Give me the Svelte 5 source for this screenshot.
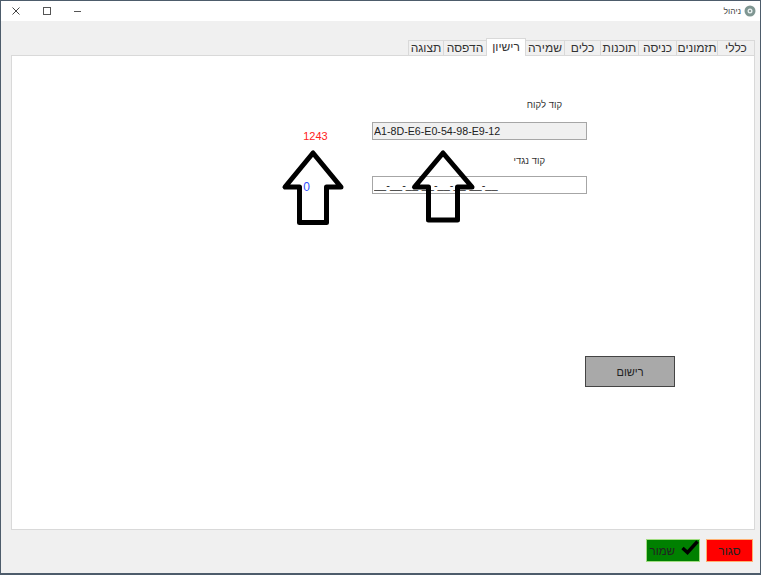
<script lang="ts">
	const tabs = [
		{ label: 'כללי', width: 38 },
		{ label: 'תזמונים', width: 42 },
		{ label: 'כניסה', width: 39 },
		{ label: 'תוכנות', width: 39 },
		{ label: 'כלים', width: 37 },
		{ label: 'שמירה', width: 40 },
		{ label: 'רישיון', width: 40 },
		{ label: 'הדפסה', width: 44 },
		{ label: 'תצוגה', width: 36 }
	];
	const activeTab = 'רישיון';

	// arrow outlines, in panel coordinates
	const arrows = [
		'M301 97 L273 131 H287.5 V166.5 H314.5 V131 H329 Z',
		'M431 97 L402.5 131 H416.5 V164 H445.5 V131 H460 Z'
	];
</script>

<div class="window">
	<header class="titlebar">
		<div class="title">
			<svg class="app-icon" viewBox="0 0 12 12" width="12" height="12" aria-hidden="true">
				<circle cx="6" cy="6" r="5.5" fill="#7f9692" />
				<circle cx="6" cy="6" r="2.5" fill="#e6eeee" />
				<circle cx="6" cy="6" r="1" fill="#6b807c" />
			</svg>
			<span>ניהול</span>
		</div>
		<div class="controls">
			<svg viewBox="0 0 10 10" width="10" height="10" aria-hidden="true">
				<path d="M1 5.5h7" stroke="#555" fill="none" />
			</svg>
			<svg viewBox="0 0 10 10" width="10" height="10" aria-hidden="true">
				<rect x="1.5" y="1.5" width="7" height="7" stroke="#555" fill="none" />
			</svg>
			<svg viewBox="0 0 10 10" width="10" height="10" aria-hidden="true">
				<path d="M1.5 1.5l7 7M8.5 1.5l-7 7" stroke="#444" fill="none" />
			</svg>
		</div>
	</header>

	<main class="body">
		<nav class="tabs">
			{#each tabs as tab}
				<div class="tab" class:active={tab.label === activeTab} style="width: {tab.width}px">{tab.label}</div>
			{/each}
		</nav>

		<section class="panel">
			<div class="numbers">
				<div class="num red">1243</div>
				<div class="num blue">0</div>
			</div>
			<div class="form">
				<label class="lbl first" for="cust">קוד לקוח</label>
				<input id="cust" class="field readonly" dir="ltr" readonly value="A1-8D-E6-E0-54-98-E9-12" />
				<label class="lbl second" for="counter">קוד נגדי</label>
				<input id="counter" class="field counter" dir="ltr" value="__-__-__-__-__-__-__-__" />
			</div>
			<div class="actions">
				<button class="register" type="button">רישום</button>
			</div>

			<svg class="arrows" aria-hidden="true">
				{#each arrows as d}
					<path {d} fill="none" stroke="#000" stroke-width="5" stroke-linejoin="round" />
				{/each}
			</svg>
		</section>

		<footer class="footer">
			<button class="btn close" type="button">סגור</button>
			<button class="btn save" type="button">
				<svg viewBox="0 0 18 15" width="18" height="15" aria-hidden="true">
					<path d="M1.5 8 L6.5 12.5 L16.5 1.5" fill="none" stroke="#000" stroke-width="3.4" />
				</svg>
				<span>שמור</span>
			</button>
		</footer>
	</main>
</div>

<style>
	:global(body) {
		margin: 0;
		background: #fff;
	}

	.window {
		box-sizing: border-box;
		width: 761px;
		height: 575px;
		display: flex;
		flex-direction: column;
		border: 1px solid #4d5c6b;
		border-bottom-width: 2px;
		font-family: 'Liberation Sans', Arial, sans-serif;
		color: #222;
	}

	.titlebar {
		height: 20px;
		flex: none;
		background: #fff;
		display: flex;
		flex-direction: row-reverse;
		justify-content: space-between;
		align-items: center;
	}

	.title {
		display: flex;
		align-items: center;
		gap: 3px;
		padding-right: 4px;
		font-size: 8.5px;
		direction: rtl;
		color: #444;
	}

	.controls {
		display: flex;
		flex-direction: row-reverse;
		gap: 21px;
		padding-left: 10px;
	}

	.body {
		flex: 1;
		min-height: 0;
		display: flex;
		flex-direction: column;
		background: #f0f0f0;
		padding: 19px 5px 0 10px;
	}

	.tabs {
		display: flex;
		flex-direction: row-reverse;
		height: 15px;
		align-items: flex-end;
	}

	.tab {
		box-sizing: border-box;
		flex: none;
		height: 15px;
		font-size: 12px;
		line-height: 14px;
		text-align: center;
		background: #f0f0f0;
		border: 1px solid #d9d9d9;
		border-bottom: 0;
		margin-left: -1px;
		direction: rtl;
		white-space: nowrap;
		color: #333;
	}

	.tab.active {
		height: 18px;
		background: #fff;
		position: relative;
		z-index: 1;
		margin-bottom: -1px;
		line-height: 17px;
	}

	.panel {
		position: relative;
		box-sizing: border-box;
		height: 475px;
		flex: none;
		background: #fff;
		border: 1px solid #d9d9d9;
		display: grid;
		grid-template-columns: 360px 215px 1fr;
		grid-template-rows: 300px auto;
	}

	.numbers {
		padding-top: 73px;
		font-size: 11px;
	}

	.num {
		line-height: 14px;
		text-align: center;
	}

	.red {
		color: #f22;
		padding-left: 247px;
	}

	.blue {
		color: #2f4fff;
		font-size: 12px;
		padding-top: 37px;
		padding-left: 229px;
	}

	.form {
		display: flex;
		flex-direction: column;
		direction: rtl;
		padding-top: 43px;
	}

	.lbl {
		font-size: 9.5px;
		line-height: 12px;
		color: #333;
	}

	.lbl.first {
		padding-right: 25px;
		margin-bottom: 11px;
	}

	.lbl.second {
		padding-right: 42px;
		margin-top: 15px;
		margin-bottom: 9px;
	}

	.field {
		box-sizing: border-box;
		width: 215px;
		height: 18px;
		padding: 0 1px;
		border: 1px solid #a6a6a6;
		background: #fff;
		font: 10.67px 'Liberation Sans', Arial, sans-serif;
		color: #222;
		outline: none;
		text-align: left;
	}

	.field.readonly {
		background: #f0f0f0;
	}

	.field.counter {
		font-size: 11px;
	}

	.actions {
		grid-column: 3;
		grid-row: 2;
	}

	.register {
		box-sizing: border-box;
		display: block;
		margin-left: -2px;
		width: 90px;
		height: 31px;
		background: #a9a9a9;
		border: 1px solid #444;
		font: 11px 'Liberation Sans', Arial, sans-serif;
		color: #222;
		direction: rtl;
	}

	.arrows {
		position: absolute;
		inset: 0;
		width: 100%;
		height: 100%;
		pointer-events: none;
	}

	.footer {
		flex: 1;
		display: flex;
		flex-direction: row-reverse;
		align-items: flex-start;
		gap: 6px;
		padding-top: 9px;
		padding-right: 2px;
	}

	.btn {
		box-sizing: border-box;
		height: 23px;
		display: flex;
		align-items: center;
		font: 12px 'Liberation Sans', Arial, sans-serif;
		color: #222;
		direction: rtl;
		padding: 0;
	}

	.close {
		width: 47px;
		justify-content: center;
		background: #f00;
		border: 1px solid #ffb070;
	}

	.save {
		width: 54px;
		gap: 6px;
		direction: ltr;
		flex-direction: row-reverse;
		justify-content: flex-start;
		font-size: 11.5px;
		background: #008000;
		border: 1px solid #9fdc80;
	}

	.save svg {
		align-self: flex-start;
	}
</style>
